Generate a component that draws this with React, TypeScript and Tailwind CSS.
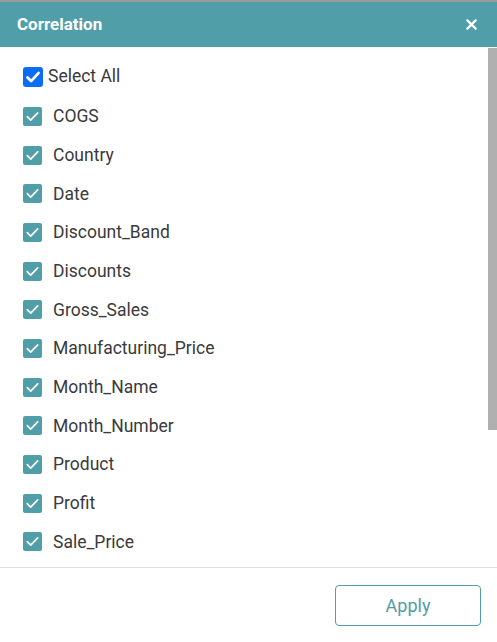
const fields = [
  'COGS',
  'Country',
  'Date',
  'Discount_Band',
  'Discounts',
  'Gross_Sales',
  'Manufacturing_Price',
  'Month_Name',
  'Month_Number',
  'Product',
  'Profit',
  'Sale_Price',
];

function Check({ className }: { className: string }) {
  return (
    <svg viewBox="0 0 20 20" className={className} fill="none">
      <path d="M4.5 10.2l3.6 3.6 7.4-7.6" stroke="white" strokeWidth="1.8" strokeLinecap="round" strokeLinejoin="round" />
    </svg>
  );
}

export default function App() {
  return (
    <div className="w-[497px] h-[642px] bg-white overflow-hidden flex flex-col font-['Roboto','Liberation_Sans',sans-serif]">
      <div className="h-[2px] bg-[#9a9a9a]" />
      {/* header */}
      <div className="h-[45px] bg-[#509ea8] flex items-center justify-between pl-[17px] pr-[20px]">
        <div className="text-white font-bold text-[17px]">Correlation</div>
        <svg viewBox="0 0 12 12" className="w-[11px] h-[11px]">
          <path d="M1.5 1.5l9 9M10.5 1.5l-9 9" stroke="white" strokeWidth="2.4" strokeLinecap="round" />
        </svg>
      </div>

      {/* body */}
      <div className="relative flex-1 overflow-hidden pt-[9px] pl-[23px]">
        <div className="absolute right-0 top-[1px] w-[9px] h-[382px] bg-[#b0b0b0]" />
        <label className="h-[41px] flex items-center gap-[5px]">
          <span className="w-[20px] h-[20px] rounded-[3px] bg-[#0b6cf5] flex items-center justify-center">
            <svg viewBox="0 0 20 20" className="w-[20px] h-[20px]" fill="none">
              <path d="M4.5 10.5l3.6 3.6 7.4-8" stroke="white" strokeWidth="2.8" strokeLinecap="round" strokeLinejoin="round" />
            </svg>
          </span>
          <span className="text-[17.5px] text-[#3a3a3a]">Select All</span>
        </label>
        {fields.map((f) => (
          <label key={f} className="h-[38.7px] flex items-center gap-[11px]">
            <span className="w-[19px] h-[19px] rounded-[2px] bg-[#509ea8] flex items-center justify-center">
              <Check className="w-[19px] h-[19px]" />
            </span>
            <span className="text-[17.5px] text-[#3a3a3a]">{f}</span>
          </label>
        ))}
      </div>

      {/* footer */}
      <div className="h-[75px] border-t border-[#e2e2e2] flex items-start justify-end pt-[17px] pr-[16px]">
        <button className="w-[146px] h-[41px] border border-[#509ea8] rounded-[4px] text-[#509ea8] text-[18px]">
          Apply
        </button>
      </div>
    </div>
  );
}
